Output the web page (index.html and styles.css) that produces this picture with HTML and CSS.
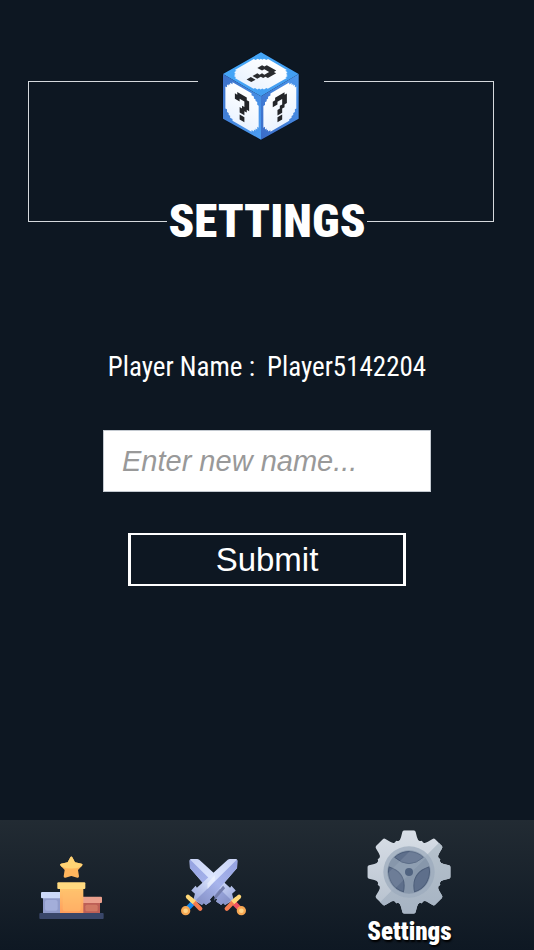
FILE: index.html
```html
<!DOCTYPE html>
<html lang="en">
<head>
<meta charset="utf-8">
<meta name="viewport" content="width=device-width, initial-scale=1">
<title>Settings</title>
<link rel="stylesheet" href="styles.css">
</head>
<body>
<header class="frame">
  <div class="frame-logo">
    <svg class="cube" viewBox="99 34 234 270" aria-hidden="true">
      <defs>
        <linearGradient id="faceTop" x1="0" y1="0" x2="1" y2="1"><stop offset="0" stop-color="#45a9fa"/><stop offset="1" stop-color="#429bef"/></linearGradient>
        <linearGradient id="faceLeft" x1="0" y1="0" x2="1" y2="1"><stop offset="0" stop-color="#3c6fc8"/><stop offset="1" stop-color="#4c9ef2"/></linearGradient>
        <linearGradient id="faceRight" x1="0" y1="1" x2="1" y2="0"><stop offset="0" stop-color="#3a6bc6"/><stop offset="1" stop-color="#4c98ee"/></linearGradient>
        <linearGradient id="panelFill" x1="0" y1="0" x2="0" y2="1"><stop offset="0" stop-color="#ffffff"/><stop offset="1" stop-color="#eaf3ff"/></linearGradient>
        <path id="panel" d="M4 1H12V1.700H13V2.400H13.700V3H14.400V4H15V12H14.400V13H13.700V13.700H13V14.400H12V15H4V14.400H3V13.700H2.400V13H1.700V12H1V4H1.700V3H2.400V2.400H3V1.700H4Z"/>
        <path id="mark" d="M6 3.500H10V4.500H11V8H10V9H9V10.500H7V8.500H8V7.500H9V5.500H7V6.500H5V4.500H6ZM7 11.200H9V13H7Z"/>
      </defs>
      <path d="M216 36 331 102V238L216 302 100 238V102Z" fill="#07101d"/>
      <path d="M216 38 329 103 216 170 102 103Z" fill="url(#faceTop)"/>
      <path d="M102 103 216 170V300L102 237Z" fill="url(#faceLeft)"/>
      <path d="M329 103 216 170V300L329 237Z" fill="url(#faceRight)"/>
      <g transform="matrix(7.06 4.06 -7.13 4.06 216 38)"><use href="#panel" fill="url(#panelFill)"/><use href="#mark" fill="#292b2f"/></g>
      <g transform="matrix(7.13 4.13 0 8.25 102 103)"><use href="#panel" fill="url(#panelFill)"/><use href="#mark" fill="#232529"/></g>
      <g transform="matrix(7.06 -4.13 0 8.2 216 170)"><use href="#panel" fill="url(#panelFill)"/><use href="#mark" fill="#232529"/></g>
    </svg>
  </div>
  <h1 class="title">SETTINGS</h1>
</header>

<main class="content">
  <p class="player"><span>Player Name :</span><span>Player5142204</span></p>
  <form class="rename">
    <input class="name-input" type="text" aria-label="New name" placeholder="Enter new name...">
    <button class="submit" type="submit">Submit</button>
  </form>
</main>

<nav class="tabs">
  <a class="tab" href="#leaderboard" aria-label="Leaderboard">
    <svg class="tab-icon" viewBox="42 28 195 195" aria-hidden="true">
      <defs>
        <linearGradient id="gold" x1="0" y1="0" x2="0" y2="1"><stop offset="0" stop-color="#ffc76f"/><stop offset="1" stop-color="#ff9c5c"/></linearGradient>
      </defs>
      <path d="M54 155H106V203H54Z" fill="#909bca"/>
      <rect x="60" y="163" width="38" height="32" rx="6" fill="#a3aeda"/>
      <rect x="48" y="139" width="60" height="19" rx="3" fill="#ccd9f8"/>
      <path d="M174 170H225V203H174Z" fill="#bd5f56"/>
      <rect x="181" y="177" width="37" height="20" rx="5" fill="#d07864"/>
      <rect x="172" y="153" width="59" height="19" rx="3" fill="#eba08d"/>
      <path d="M105 126H175V203H105Z" fill="url(#gold)"/>
      <rect x="113" y="137" width="54" height="60" rx="7" fill="#ffc06e" opacity=".5"/>
      <rect x="97" y="110" width="84" height="20" rx="3" fill="#ffda80"/>
      <rect x="43" y="202" width="193" height="18" rx="3" fill="#394669"/>
      <path d="M136 35Q139 30 142 35L150 50 170 54Q175 56 171 60L159 73 162 92Q162 97 157 96L139 91 121 96Q116 97 116 92L119 73 107 60Q103 56 108 54L128 50Z" fill="#ffb65d"/>
      <path d="M136 35Q139 30 142 35L150 50 170 54Q175 56 171 60L167 64Q139 73 111 64L107 60Q103 56 108 54L128 50Z" fill="#ffd374"/>
    </svg>
  </a>
  <a class="tab" href="#battle" aria-label="Battle">
    <svg class="tab-icon" viewBox="33 30 196 196" aria-hidden="true">
      <defs>
        <linearGradient id="blade" gradientUnits="userSpaceOnUse" x1="190" y1="50" x2="90" y2="170"><stop offset="0" stop-color="#cbd5f7"/><stop offset=".5" stop-color="#dde6ff"/><stop offset="1" stop-color="#a3b0e0"/></linearGradient>
        <linearGradient id="bladeEdge" gradientUnits="userSpaceOnUse" x1="200" y1="60" x2="90" y2="175"><stop offset="0" stop-color="#97a4e2"/><stop offset=".5" stop-color="#a7b4ec"/><stop offset="1" stop-color="#8793c8"/></linearGradient>
        <g id="sword">
          <path d="M174 44Q177 42 180 42H199Q203 42 203 47L202 69 120 164 123 170 108 181 102 175 96 181 70 166 75 147 64 137 77 123 81 129Z" fill="url(#blade)"/>
          <path d="M201 44Q203 45 203 48L202 69 120 164 123 170 108 181 102 175 96 181 78 166Z" fill="url(#bladeEdge)"/>
          <path d="M52 192 69 175" stroke="currentColor" stroke-width="15"/>
          <path d="M54 156 73 173" stroke="#ffd878" stroke-width="13" stroke-linecap="round"/>
          <path d="M73 173 91 192" stroke="#f47c50" stroke-width="13" stroke-linecap="round"/>
          <path d="M60 161 73 173" stroke="#ffd878" stroke-width="13"/>
          <circle cx="47" cy="198" r="14" fill="#f7a752"/>
          <circle cx="47" cy="198" r="7" fill="#ffd68a"/>
        </g>
      </defs>
      <use href="#sword" transform="matrix(-1 0 0 1 262 0)" color="#f05260"/>
      <path d="M135 152 160 123 166 130 133 168Z" fill="#747ead"/>
      <use href="#sword" color="#1689ee"/>
      <path d="M113 115 135 90V107L113 133Z" fill="#f4f7ff" opacity=".55"/>
    </svg>
  </a>
  <a class="tab tab-active" href="#settings" aria-current="page">
    <svg class="gear" viewBox="-126 -126 252 252" aria-hidden="true">
      <defs>
        <linearGradient id="steel" x1="0" y1="0" x2="0" y2="1"><stop offset="0" stop-color="#d9dfe7"/><stop offset="1" stop-color="#b4bfcc"/></linearGradient>
        <linearGradient id="steelShade" x1="0" y1="0" x2="0" y2="1"><stop offset="0" stop-color="#b8c4cd"/><stop offset="1" stop-color="#a6b3c3"/></linearGradient>
        <path id="tooth" d="M-20-120Q-19-125-14-125H14Q19-125 20-120L24-104Q28-89 39-94L0 0-39-94Q-28-89-24-104Z"/>
        <clipPath id="gearShape">
          <circle r="94"/>
          <use href="#tooth"/>
          <use href="#tooth" transform="rotate(45)"/>
          <use href="#tooth" transform="rotate(90)"/>
          <use href="#tooth" transform="rotate(135)"/>
          <use href="#tooth" transform="rotate(180)"/>
          <use href="#tooth" transform="rotate(225)"/>
          <use href="#tooth" transform="rotate(270)"/>
          <use href="#tooth" transform="rotate(315)"/>
        </clipPath>
        <clipPath id="hub"><circle r="64"/></clipPath>
      </defs>
      <g clip-path="url(#gearShape)">
        <rect x="-126" y="-126" width="252" height="252" fill="url(#steel)"/>
        <path d="M126-126V126H-126V126L-86 90 90-88Z" fill="url(#steelShade)"/>
      </g>
      <circle r="77" fill="#9cabbc" opacity=".75"/>
      <circle r="65" fill="#8797ab"/>
      <g clip-path="url(#hub)">
        <g fill="#5e6f8b" stroke="#4c5d79" stroke-width="3">
          <path id="window" d="M-43-44Q0-6 43-44A62 62 0 0 0-43-44Z"/>
          <use href="#window" transform="rotate(120)"/>
          <use href="#window" transform="rotate(240)"/>
        </g>
        <path d="M-70 10 10-70 54-46-46 54Z" fill="#c5d0dc" opacity=".15"/>
      </g>
      <circle r="12" fill="#506380"/>
    </svg>
    <span class="tab-label">Settings</span>
  </a>
</nav>
</body>
</html>
```
FILE: styles.css
```css
* {
  box-sizing: border-box;
}

body {
  margin: 0;
  min-height: 100vh;
  display: flex;
  flex-direction: column;
  background: #0d1722;
  color: #fff;
  font-family: "Roboto Condensed", "Liberation Sans Narrow", "Liberation Sans", sans-serif;
}

.frame {
  margin: 81px 40px 0 28px;
  height: 141px;
  display: flex;
  flex-direction: column;
  align-items: center;
  justify-content: space-between;
  border: 1px solid #d5d9dd;
}

.frame-logo {
  width: 126px;
  margin-top: -31px;
  display: flex;
  justify-content: center;
  background: #0d1722;
}

.cube {
  width: 78px;
  height: 90px;
}

.title {
  margin: 0 0 -32px 12px;
  padding: 0 1px;
  background: #0d1722;
  font-size: 47px;
  line-height: 64px;
  font-weight: 900;
}

.content {
  padding: 125px 24px 24px;
  display: flex;
  flex-direction: column;
  align-items: center;
}

.player {
  margin: 0;
  display: flex;
  flex-wrap: wrap;
  justify-content: center;
  gap: 12px;
  font-size: 27px;
  line-height: 40px;
}

.rename {
  width: 100%;
  margin-top: 43px;
  display: flex;
  flex-direction: column;
  align-items: center;
  gap: 41px;
}

.name-input {
  width: 100%;
  max-width: 328px;
  padding: 13px 18px;
  border: 1px solid #c3c9d0;
  border-radius: 0;
  background: #fff;
  color: #222;
  font: 29px/34px "Liberation Sans", Arial, sans-serif;
}

.name-input::placeholder {
  color: #999;
  font-style: italic;
  opacity: 1;
}

.submit {
  width: 100%;
  max-width: 278px;
  padding: 6px 16px;
  border: solid #fff;
  border-width: 2px 3px;
  background: transparent;
  color: #fff;
  font: 33px/37px "Liberation Sans", Arial, sans-serif;
}

.tabs {
  margin-top: auto;
  height: 130px;
  display: grid;
  grid-template-columns: 4fr 4fr 7fr;
  background: linear-gradient(#222b33, #0e1823);
}

.tab {
  display: flex;
  flex-direction: column;
  align-items: center;
  justify-content: center;
  padding-top: 4px;
  color: #fff;
  text-decoration: none;
}

.tab-active {
  justify-content: flex-start;
  padding-top: 10px;
}

.tab-icon {
  width: 65px;
  height: 65px;
}

.gear {
  width: 84px;
  height: 84px;
}

.tab-label {
  font-size: 25px;
  line-height: 36px;
  font-weight: 900;
  text-shadow: 1px 2px 2px #000;
}
```
